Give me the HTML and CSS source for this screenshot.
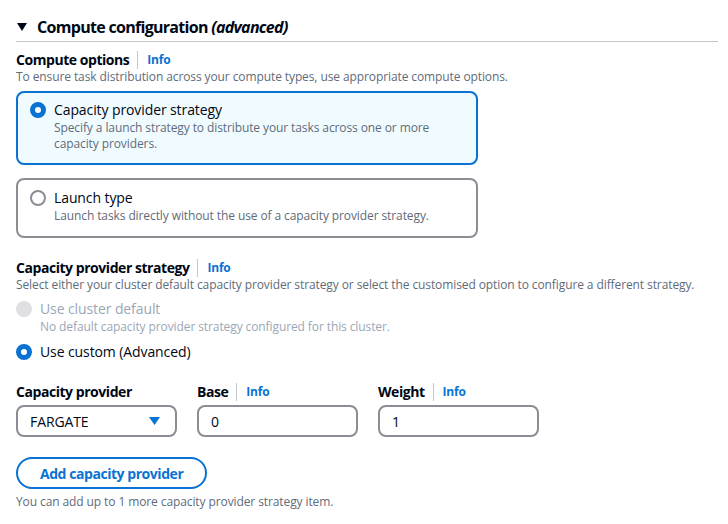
FILE: index.html
```html
<!DOCTYPE html>
<html lang="en">
<head>
<meta charset="utf-8">
<title>Compute configuration</title>
<link rel="stylesheet" href="styles.css">
</head>
<body>
<section class="panel">
  <h2 class="panel-header">
    <svg class="caret" width="10" height="8" viewBox="0 0 10 8"><path d="M0 0H10L5 8Z" fill="#000716"/></svg>
    <span>Compute configuration <i>(advanced)</i></span>
  </h2>

  <div class="field field-first">
    <div class="label-row"><span class="label">Compute options</span><span class="sep"></span><span class="info">Info</span></div>
    <div class="desc">To ensure task distribution across your compute types, use appropriate compute options.</div>
    <div class="tiles">
      <div class="tile selected">
        <span class="radio checked"></span>
        <div>
          <div class="tile-label">Capacity provider strategy</div>
          <div class="desc">Specify a launch strategy to distribute your tasks across one or more<br>capacity providers.</div>
        </div>
      </div>
      <div class="tile">
        <span class="radio"></span>
        <div>
          <div class="tile-label">Launch type</div>
          <div class="desc">Launch tasks directly without the use of a capacity provider strategy.</div>
        </div>
      </div>
    </div>
  </div>

  <div class="field field-second">
    <div class="label-row"><span class="label">Capacity provider strategy</span><span class="sep"></span><span class="info">Info</span></div>
    <div class="desc">Select either your cluster default capacity provider strategy or select the customised option to configure a different strategy.</div>
    <div class="radio-group">
      <div class="radio-item disabled">
        <span class="radio"></span>
        <div>
          <div class="tile-label">Use cluster default</div>
          <div class="desc">No default capacity provider strategy configured for this cluster.</div>
        </div>
      </div>
      <div class="radio-item">
        <span class="radio checked"></span>
        <div>
          <div class="tile-label">Use custom (Advanced)</div>
        </div>
      </div>
    </div>
  </div>

  <div class="provider-grid">
    <div class="cell">
      <div class="label-row"><span class="label">Capacity provider</span></div>
      <div class="input select"><span>FARGATE</span><svg width="11" height="8" viewBox="0 0 11 8"><path d="M0 0H11L5.5 8Z" fill="#0972d3"/></svg></div>
    </div>
    <div class="cell">
      <div class="label-row"><span class="label">Base</span><span class="sep"></span><span class="info">Info</span></div>
      <div class="input"><span>0</span></div>
    </div>
    <div class="cell">
      <div class="label-row"><span class="label">Weight</span><span class="sep"></span><span class="info">Info</span></div>
      <div class="input"><span>1</span></div>
    </div>
  </div>

  <button class="btn" type="button">Add capacity provider</button>
  <div class="desc footer">You can add up to 1 more capacity provider strategy item.</div>
</section>
</body>
</html>
```

FILE: styles.css
```css
* { box-sizing: border-box; }

body {
  margin: 0;
  background: #ffffff;
  color: #000716;
  font-family: "Open Sans", "Noto Sans", Arial, sans-serif;
  letter-spacing: -0.1px;
}

.panel {
  padding: 0 10px 0 16px;
}

.panel-header {
  margin: 0;
  padding: 16px 0 3px 1px;
  display: flex;
  align-items: center;
  gap: 10px;
  font-size: 16px;
  line-height: 22px;
  font-weight: 700;
  letter-spacing: -0.7px;
  border-bottom: 1px solid #c6c6cd;
}

.panel-header i { font-style: italic; }

.caret { flex: none; }

.field-first { margin-top: 9px; }
.field-second { margin-top: 21px; }

.label-row {
  display: flex;
  align-items: center;
  font-size: 14px;
  line-height: 18px;
}

.label {
  font-weight: 700;
  letter-spacing: -0.45px;
}

.sep {
  width: 1px;
  height: 18px;
  background: #c6c6cd;
  margin: 0 9px 0 8px;
}

.info {
  color: #0972d3;
  font-weight: 700;
  font-size: 12px;
  letter-spacing: -0.2px;
}

.desc {
  font-size: 12px;
  line-height: 16px;
  color: #5f6b7a;
}

.tiles {
  margin-top: 6px;
  width: 462px;
  display: flex;
  flex-direction: column;
  gap: 13px;
}

.tile {
  display: flex;
  align-items: flex-start;
  gap: 8px;
  border: 2px solid #8c8c94;
  border-radius: 8px;
  padding: 8px 12px 12px;
  background: #ffffff;
}

.tile.selected {
  border-color: #0972d3;
  background: #f0fbff;
  padding: 7px 12px 11px;
}

.tile-label {
  font-size: 14px;
  line-height: 20px;
}

.radio {
  flex: none;
  width: 16px;
  height: 16px;
  margin-top: 2px;
  border-radius: 50%;
  border: 2px solid #8c8c94;
  background: #ffffff;
}

.radio.checked {
  border: 5px solid #0972d3;
}

.radio-group {
  margin-top: 6px;
  display: flex;
  flex-direction: column;
  gap: 7px;
}

.radio-item {
  display: flex;
  align-items: flex-start;
  gap: 8px;
}

.radio-item.disabled .radio {
  border-color: #dedee3;
  background: #dedee3;
}

.radio-item.disabled .tile-label,
.radio-item.disabled .desc {
  color: #9ba7b6;
}

.provider-grid {
  margin-top: 21px;
  display: grid;
  grid-template-columns: repeat(3, 161px);
  column-gap: 20px;
}

.cell .label-row { margin-bottom: 4px; }

.input {
  height: 32px;
  border: 2px solid #8c8c94;
  border-radius: 8px;
  padding: 0 12px;
  display: flex;
  align-items: center;
  justify-content: space-between;
  font-size: 14px;
}

.input.select { padding-right: 15px; }

.btn {
  margin-top: 20px;
  height: 32px;
  padding: 0 22px;
  border: 2px solid #0972d3;
  border-radius: 20px;
  background: #ffffff;
  color: #0972d3;
  font-family: inherit;
  font-size: 14px;
  font-weight: 700;
  letter-spacing: -0.45px;
  display: inline-flex;
  align-items: center;
}

.footer { margin-top: 5px; }
```
